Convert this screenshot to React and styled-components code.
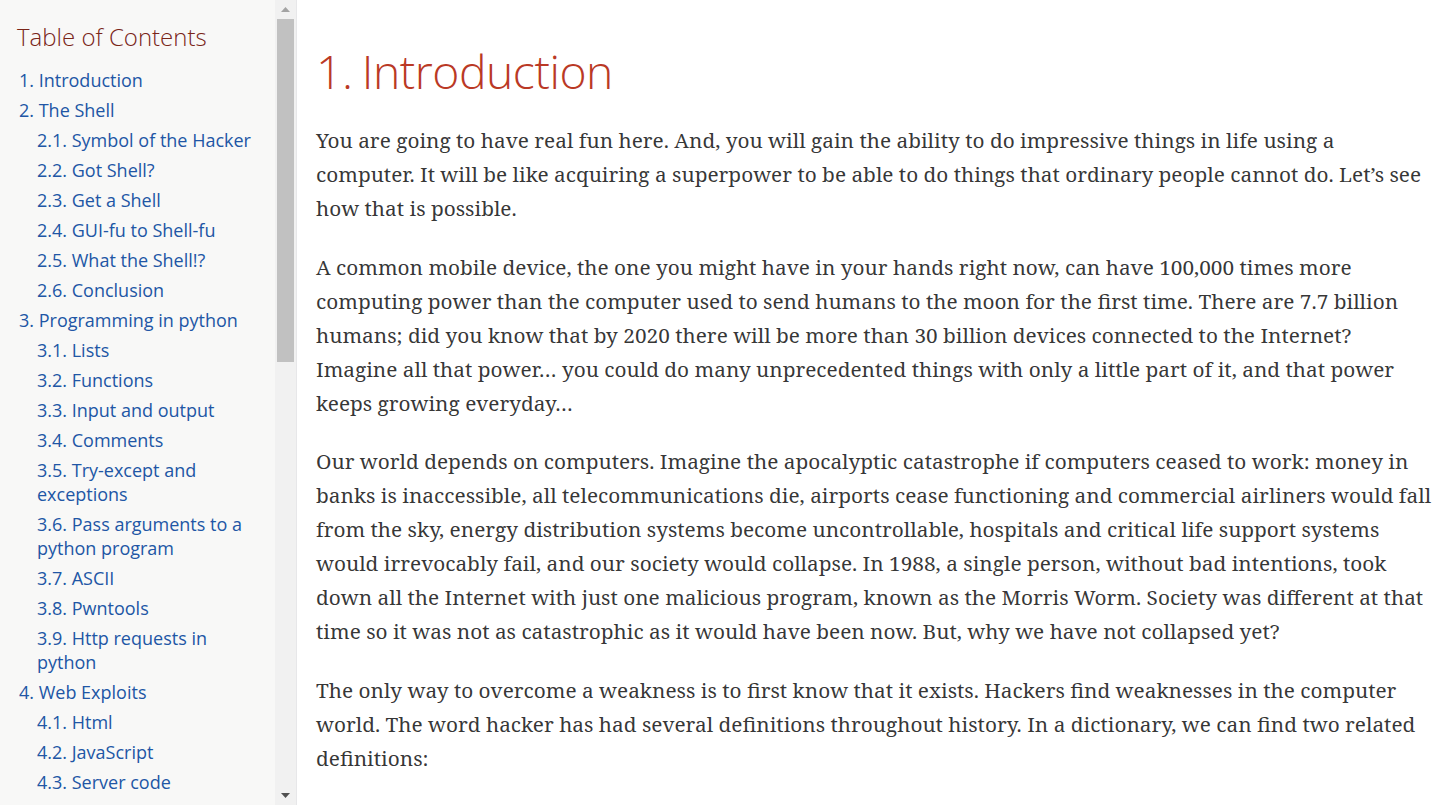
import React from "react";
import styled, { createGlobalStyle } from "styled-components";

const Global = createGlobalStyle`
  html, body { margin: 0; padding: 0; background: #fff; }
  body { overflow: hidden; }
  * { box-sizing: border-box; }
`;

const Page = styled.div`
  display: flex;
  height: 805px;
  overflow: hidden;
`;

const Sidebar = styled.nav`
  flex: 0 0 297px;
  display: flex;
  background: #f8f8f7;
  border-right: 1px solid #e7e7e9;
  height: 100%;
`;

const TocBody = styled.div`
  flex: 1;
  overflow: hidden;
  padding: 22px 16px 0 17px;
`;

const TocTitle = styled.div`
  font-family: "Open Sans", "DejaVu Sans", sans-serif;
  font-weight: 300;
  font-size: 24px;
  line-height: 29px;
  color: #7a2518;
  margin-bottom: 17px;
`;

const TocList = styled.ul`
  list-style: none;
  margin: 0 0 0 ${(p) => (p.$nested ? 0 : 2)}px;
  padding: 0 0 0 ${(p) => (p.$nested ? 18 : 0)}px;
  font-family: "Open Sans", "DejaVu Sans", sans-serif;
  font-size: 18px;
`;

const TocItem = styled.li`
  margin-top: 6px;
  line-height: 24px;
`;

const TocLink = styled.a`
  color: #2156a5;
  text-decoration: none;
`;

const Scrollbar = styled.div`
  flex: 0 0 21px;
  display: flex;
  flex-direction: column;
  background: #f1f1f1;
`;

const ScrollArrow = styled.div`
  height: 19px;
  display: flex;
  align-items: center;
  justify-content: center;
  color: ${(p) => (p.$dim ? "#a3a3a3" : "#505050")};
`;

const Thumb = styled.div`
  margin: 0 2px;
  height: 343px;
  background: #c1c1c1;
`;

const Spacer = styled.div`
  flex: 1;
`;

const Main = styled.main`
  flex: 1;
  padding: 48px 20px 0 19px;
  overflow: hidden;
`;

const Heading = styled.h2`
  font-family: "Open Sans", "DejaVu Sans", sans-serif;
  font-weight: 300;
  font-size: 46.25px;
  line-height: 47px;
  letter-spacing: -0.01em;
  word-spacing: -0.05em;
  color: #ba3925;
  margin: 0 0 28px 0;
`;

const Para = styled.p`
  font-family: "Noto Serif", "DejaVu Serif", serif;
  font-stretch: condensed;
  font-size: 20.8px;
  line-height: 34px;
  color: rgba(0, 0, 0, 0.8);
  margin: 0 0 24.5px 0;
  text-rendering: optimizeLegibility;
`;

const toc = [
  ["1. Introduction", [] ],
  ["2. The Shell", [
    "2.1. Symbol of the Hacker",
    "2.2. Got Shell?",
    "2.3. Get a Shell",
    "2.4. GUI-fu to Shell-fu",
    "2.5. What the Shell!?",
    "2.6. Conclusion",
  ]],
  ["3. Programming in python", [
    "3.1. Lists",
    "3.2. Functions",
    "3.3. Input and output",
    "3.4. Comments",
    "3.5. Try-except and exceptions",
    "3.6. Pass arguments to a python program",
    "3.7. ASCII",
    "3.8. Pwntools",
    "3.9. Http requests in python",
  ]],
  ["4. Web Exploits", [
    "4.1. Html",
    "4.2. JavaScript",
    "4.3. Server code",
  ]],
];

const paragraphs = [
  "You are going to have real fun here. And, you will gain the ability to do impressive things in life using a computer. It will be like acquiring a superpower to be able to do things that ordinary people cannot do. Let\u2019s see how that is possible.",
  "A common mobile device, the one you might have in your hands right now, can have 100,000 times more computing power than the computer used to send humans to the moon for the first time. There are 7.7 billion humans; did you know that by 2020 there will be more than 30 billion devices connected to the Internet? Imagine all that power\u2026 you could do many unprecedented things with only a little part of it, and that power keeps growing everyday\u2026",
  "Our world depends on computers. Imagine the apocalyptic catastrophe if computers ceased to work: money in banks is inaccessible, all telecommunications die, airports cease functioning and commercial airliners would fall from the sky, energy distribution systems become uncontrollable, hospitals and critical life support systems would irrevocably fail, and our society would collapse. In 1988, a single person, without bad intentions, took down all the Internet with just one malicious program, known as the Morris Worm. Society was different at that time so it was not as catastrophic as it would have been now. But, why we have not collapsed yet?",
  "The only way to overcome a weakness is to first know that it exists. Hackers find weaknesses in the computer world. The word hacker has had several definitions throughout history. In a dictionary, we can find two related definitions:",
];

function Triangle({ down }) {
  return (
    <svg width="9" height="5" viewBox="0 0 9 5">
      <path d={down ? "M0 0 H9 L4.5 5 Z" : "M0 5 H9 L4.5 0 Z"} fill="currentColor" />
    </svg>
  );
}

export default function App() {
  return (
    <>
      <Global />
      <Page>
        <Sidebar>
          <TocBody>
            <TocTitle>Table of Contents</TocTitle>
            <TocList>
              {toc.map(([label, subs]) => (
                <TocItem key={label}>
                  <TocLink href="#">{label}</TocLink>
                  {subs.length > 0 && (
                    <TocList $nested>
                      {subs.map((s) => (
                        <TocItem key={s}>
                          <TocLink href="#">{s}</TocLink>
                        </TocItem>
                      ))}
                    </TocList>
                  )}
                </TocItem>
              ))}
            </TocList>
          </TocBody>
          <Scrollbar>
            <ScrollArrow $dim>
              <Triangle />
            </ScrollArrow>
            <Thumb />
            <Spacer />
            <ScrollArrow>
              <Triangle down />
            </ScrollArrow>
          </Scrollbar>
        </Sidebar>
        <Main>
          <Heading>1. Introduction</Heading>
          {paragraphs.map((t, i) => (
            <Para key={i}>{t}</Para>
          ))}
        </Main>
      </Page>
    </>
  );
}
